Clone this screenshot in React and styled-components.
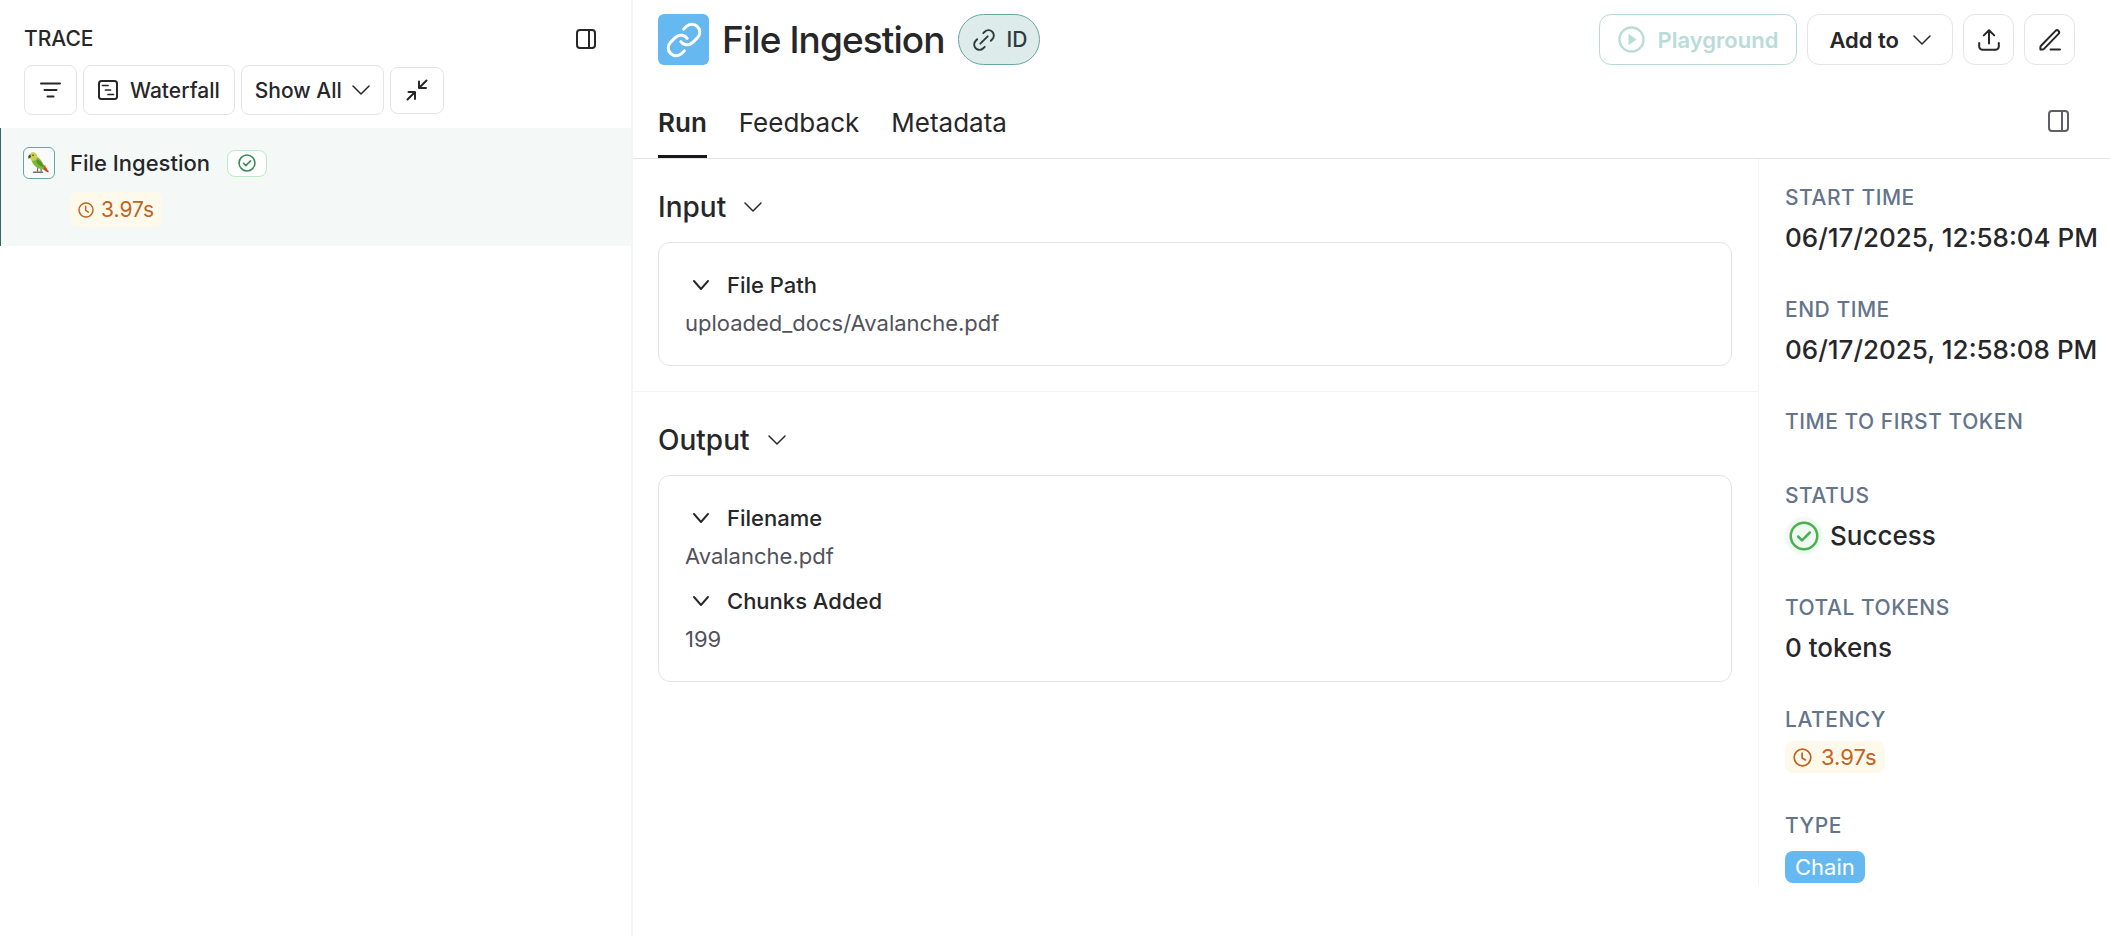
import React from 'react';
import styled, { createGlobalStyle } from 'styled-components';

const GlobalStyle = createGlobalStyle`
  *, *::before, *::after { box-sizing: border-box; }
  body {
    margin: 0;
    background: #fff;
    color: #27272a;
    font-family: Inter, "Liberation Sans", sans-serif;
    font-size: 22px;
    -webkit-font-smoothing: antialiased;
  }
  button { font: inherit; color: inherit; cursor: pointer; }
  h1, h2, h3, p, dl, dt, dd, ul { margin: 0; padding: 0; font-weight: inherit; }
`;

/* ---------- icons ---------- */

const Svg = styled.svg`
  display: block;
  flex: none;
  width: ${(p) => p.$w}px;
  height: ${(p) => p.$h || p.$w}px;
  fill: none;
  stroke: currentColor;
  stroke-width: ${(p) => p.$stroke || 2};
  stroke-linecap: round;
  stroke-linejoin: round;
`;

const PanelIcon = ({ size = 20, width = 20, divider = 13 }) => (
  <Svg $w={width} $h={size} viewBox={`0 0 ${width} ${size}`} aria-hidden="true">
    <rect x="1" y="1" width={width - 2} height={size - 2} rx="3" />
    <path d={`M${divider} 1V${size - 1}`} />
  </Svg>
);

const FilterIcon = () => (
  <Svg $w={21} $h={16} viewBox="0 0 21 16" aria-hidden="true">
    <path d="M1 1.5h19M4.5 8h12M7.5 14.5h6" />
  </Svg>
);

const WaterfallIcon = () => (
  <Svg $w={20} viewBox="0 0 20 20" aria-hidden="true">
    <rect x="1" y="1" width="18" height="18" rx="2.5" />
    <path d="M4.500 5.500h5.500M7.500 10h5M10 14.500h5.500" strokeWidth="1.7" />
  </Svg>
);

const ChevronIcon = ({ width = 18, height = 10, stroke = 1.5 }) => (
  <Svg $w={width} $h={height} $stroke={stroke} viewBox={`0 0 ${width} ${height}`} aria-hidden="true">
    <path d={`M1 1l${width / 2 - 1} ${height - 2}l${width / 2 - 1} ${2 - height}`} />
  </Svg>
);

const CollapseIcon = () => (
  <Svg $w={22} viewBox="0 0 22 22" aria-hidden="true">
    <path d="M20.5 1.5l-7 7M13 2.5V9h7M1.5 20.5l7-7M2.5 13H9v7" />
  </Svg>
);

const CheckCircleIcon = ({ size, stroke }) => (
  <Svg $w={size} $stroke={stroke} viewBox="0 0 24 24" aria-hidden="true">
    <circle cx="12" cy="12" r="10.6" />
    <path d="M7.3 12.4l3.1 3.1 6.3-6.3" />
  </Svg>
);

const ClockIcon = ({ size }) => (
  <Svg $w={size} $stroke={2.2} viewBox="0 0 24 24" aria-hidden="true">
    <circle cx="12" cy="12" r="10.5" />
    <path d="M11.5 6.5v6l4.2 2.6" />
  </Svg>
);

const ChainIcon = () => (
  <Svg $w={38} $stroke={1.9} viewBox="0 0 24 24" aria-hidden="true">
    <path d="M10 13a5 5 0 0 0 7.54.54l3-3a5 5 0 0 0-7.07-7.07l-1.72 1.71" />
    <path d="M14 11a5 5 0 0 0-7.54-.54l-3 3a5 5 0 0 0 7.07 7.07l1.71-1.71" />
  </Svg>
);

const LinkIcon = () => (
  <Svg $w={22} $stroke={1.8} viewBox="1.500 1.500 21 21" aria-hidden="true">
    <path d="M8.5 15.5l7-7" />
    <path d="M12.700 18.500l-1.400 1.400a5 5 0 0 1-7.200-7.200L5.500 11.300" />
    <path d="M18.500 12.700l1.400-1.400a5 5 0 0 0-7.200-7.200L11.300 5.500" />
  </Svg>
);

const PlayIcon = () => (
  <Svg $w={27} viewBox="0 0 27 27" $stroke={2.4} aria-hidden="true">
    <circle cx="13.5" cy="13.5" r="12" />
    <path d="M10.500 7.800l8 5.700-8 5.700z" fill="currentColor" stroke="none" />
  </Svg>
);

const UploadIcon = () => (
  <Svg $w={22} viewBox="0 0 22 22" aria-hidden="true">
    <path d="M11 14.500V1.500M5.800 6.400L11 1.200l5.200 5.200M1.200 14v3.400a3.400 3.400 0 0 0 3.400 3.400h12.800a3.400 3.400 0 0 0 3.400-3.400V14" />
  </Svg>
);

const EditIcon = () => (
  <Svg $w={22} viewBox="0 0 22 22" aria-hidden="true">
    <path d="M11.5 20.500H21" />
    <path d="M1.400 18.200a2 2 0 0 1 .6-1.400L16.500 1.900a2.100 2.100 0 0 1 3 3L5 19.900a2 2 0 0 1-1.400.6H1.400z" />
  </Svg>
);

const ParrotIcon = () => (
  <svg width="24" height="24" viewBox="0 0 24 24" aria-hidden="true">
    <path d="M11 15l-.6 5.6M14 16.5l.2 4.2" stroke="#77716c" strokeWidth="1.3" />
    <path d="M6.500 21.300h9" stroke="#77716c" strokeWidth="1.5" strokeLinecap="round" />
    <path d="M14 12l4 2.6 4 6.3-3.2-.5-4.2-4z" fill="#d9652b" />
    <path d="M17 16l4.900 5.200-1.600-.2-4.200-3.600z" fill="#b93f2c" />
    <path d="M4.500 8.500c.6 4.600 4.500 8.600 9 9.200l3.500 1.300-.5-4.400c-.6-4-4-7.200-6.400-8.600z" fill="#7cba35" />
    <path d="M9.500 8c3.600 1.500 6.600 4.500 7 8.500l-3.400-1.700C10.800 13.500 9 11 9.500 8z" fill="#55922a" />
    <path d="M2.500 6.600C1.800 3.200 3.800 1.300 6.200 1.300c2.800 0 4.300 2.700 4.100 5.500-.3 2.600-3.600 3.600-5.800 2.600z" fill="#cbd04f" />
    <path d="M3.300 3.400C1.100 3.700.7 6 1.800 8c.5-1.100 1.500-1.500 2.300-2.100z" fill="#4b3f3f" />
    <circle cx="6" cy="4.300" r=".8" fill="#3b3030" />
  </svg>
);

/* ---------- page ---------- */

const Page = styled.div`
  display: flex;
  min-height: 100vh;
`;

const Sidebar = styled.section`
  flex: 0 0 30%;
  border-right: 2px solid #f4f4f5;
`;

const SidebarHeader = styled.header`
  display: flex;
  align-items: center;
  justify-content: space-between;
  padding: 24px 35px 0 24px;
  line-height: 30px;
`;

const SidebarTitle = styled.h2`
  font-size: 21px;
  font-weight: 500;
`;

const IconButton = styled.button`
  display: flex;
  padding: 0;
  border: 0;
  background: none;
  color: ${(p) => (p.$muted ? '#5f5f66' : '#27272a')};
`;

const Toolbar = styled.div`
  display: flex;
  align-items: center;
  gap: 6px;
  padding: 11px 24px 13px;
`;

const Button = styled.button`
  display: flex;
  align-items: center;
  justify-content: center;
  gap: ${(p) => p.$gap || 12}px;
  height: ${(p) => p.$h || 50}px;
  min-width: ${(p) => p.$min || 0}px;
  padding: 0 ${(p) => p.$px || 0}px;
  border: 1px solid #e4e4e7;
  border-radius: ${(p) => p.$radius || 8}px;
  background: #fff;
  color: #27272a;
  font-size: ${(p) => p.$size || 21}px;
  font-weight: ${(p) => p.$weight || 500};
  white-space: nowrap;
`;

const PlaygroundButton = styled(Button)`
  border-color: #b5dbd7;
  color: #b9dcd8;
`;

const TraceRow = styled.article`
  display: flex;
  gap: 15px;
  padding: 19px 22px;
  border-left: 1px solid #2f6868;
  background: #f4f9f8;
`;

const ParrotBox = styled.span`
  display: flex;
  align-items: center;
  justify-content: center;
  width: 32px;
  height: 32px;
  border: 1px solid #68a5a3;
  border-radius: 6px;
  background: #f8fbfa;
`;

const TraceBody = styled.div`
  display: flex;
  flex-direction: column;
  align-items: flex-start;
  gap: 13px;
`;

const TraceName = styled.div`
  display: flex;
  align-items: center;
  gap: 17px;
  line-height: 32px;
  font-weight: 500;
`;

const StatusBadge = styled.span`
  display: flex;
  align-items: center;
  justify-content: center;
  width: 40px;
  height: 27px;
  border: 1px solid #bbebc8;
  border-radius: 8px;
  background: #fff;
  color: #3a8c56;
`;

const LatencyBadge = styled.span`
  display: inline-flex;
  align-items: center;
  gap: ${(p) => p.$gap}px;
  height: ${(p) => p.$h}px;
  padding: 0 ${(p) => p.$px}px;
  border-radius: 8px;
  background: #fefaeb;
  color: #c2621f;
  font-size: ${(p) => p.$size}px;
`;

const Main = styled.main`
  flex: 1;
  min-width: 0;
`;

const MainHeader = styled.header`
  display: flex;
  align-items: center;
  justify-content: space-between;
  padding: 14px 35px 0 25px;
`;

const Group = styled.div`
  display: flex;
  align-items: center;
  gap: ${(p) => p.$gap}px;
`;

const ChainLogo = styled.span`
  display: flex;
  align-items: center;
  justify-content: center;
  width: 51px;
  height: 51px;
  border-radius: 6px;
  background: #65b9f0;
  color: #fff;
`;

const Title = styled.h1`
  font-size: 37px;
  font-weight: 500;
  line-height: 51px;
  letter-spacing: -0.025em;
  white-space: nowrap;
`;

const IdButton = styled.button`
  display: flex;
  align-items: center;
  gap: 12px;
  height: 51px;
  padding: 0 12px 0 14px;
  border: 1px solid #68a5a3;
  border-radius: 26px;
  background: #ddeceb;
  color: #2b3c3e;
  font-size: 21px;
  font-weight: 500;
`;

const TabBar = styled.nav`
  display: flex;
  align-items: flex-start;
  justify-content: space-between;
  padding: 28px 41px 0 25px;
  border-bottom: 1px solid #e4e4e7;
`;

const Tab = styled.button`
  height: 65px;
  padding: 0 0 3px;
  border: 0;
  border-bottom: 3px solid ${(p) => (p.$active ? '#18181b' : 'transparent')};
  background: none;
  font-size: 26px;
  font-weight: ${(p) => (p.$active ? 600 : 400)};
`;

const ToggleSlot = styled.div`
  padding-top: 17px;
`;

const Columns = styled.div`
  display: flex;
`;

const Content = styled.div`
  flex: 1;
  min-width: 0;
`;

const Section = styled.section`
  padding: 24px 26px 25px 25px;
  & + & { border-top: 1px solid #f4f4f5; }
`;

const SectionTitle = styled.h2`
  display: flex;
  align-items: center;
  gap: 18px;
  margin-bottom: 11px;
  font-size: 28px;
  font-weight: 500;
  line-height: 48px;
`;

const Card = styled.div`
  display: flex;
  flex-direction: column;
  gap: 7px;
  padding: 23px 26px;
  border: 1px solid #e4e4e7;
  border-radius: 12px;
  line-height: 38px;
`;

const FieldName = styled.h3`
  display: flex;
  align-items: center;
  gap: 18px;
  padding-left: 8px;
  font-size: 22px;
  font-weight: 500;
`;

const FieldValue = styled.p`
  color: #52525b;
`;

const Details = styled.dl`
  display: flex;
  flex-direction: column;
  gap: 38px;
  flex: 0 0 352px;
  padding: 24px 0 2px 26px;
  border-left: 1px solid #f4f4f5;
`;

const Detail = styled.div`
  display: flex;
  flex-direction: column;
  align-items: flex-start;
  gap: ${(p) => p.$gap || 6}px;
`;

const DetailLabel = styled.dt`
  color: #64748b;
  font-size: 21px;
  font-weight: 500;
  line-height: 30px;
  letter-spacing: 0.025em;
`;

const DetailValue = styled.dd`
  display: flex;
  align-items: center;
  gap: 7px;
  font-size: 26px;
  font-weight: 500;
  line-height: 38px;
  white-space: nowrap;
`;

const BadgeValue = styled.dd`
  display: flex;
  font-size: 22px;
`;

const SuccessMark = styled.span`
  display: flex;
  padding: 4px;
  border-radius: 50%;
  background: #eefaf2;
  color: #4caf50;
`;

const TypeBadge = styled.span`
  padding: 0 10px;
  border-radius: 8px;
  background: #65b9f0;
  color: #fff;
  line-height: 32px;
`;

const Field = ({ name, value }) => (
  <div>
    <FieldName>
      <ChevronIcon width={16} height={10} stroke={1.9} />
      {name}
    </FieldName>
    <FieldValue>{value}</FieldValue>
  </div>
);

const FieldSection = ({ title, fields }) => (
  <Section>
    <SectionTitle>
      {title}
      <ChevronIcon />
    </SectionTitle>
    <Card>
      {fields.map(([name, value]) => (
        <Field key={name} name={name} value={value} />
      ))}
    </Card>
  </Section>
);

const TextDetail = ({ label, value }) => (
  <Detail>
    <DetailLabel>{label}</DetailLabel>
    <DetailValue>{value}</DetailValue>
  </Detail>
);

export default function App() {
  return (
    <>
      <GlobalStyle />
      <Page>
        <Sidebar>
          <SidebarHeader>
            <SidebarTitle>TRACE</SidebarTitle>
            <IconButton aria-label="Toggle trace panel">
              <PanelIcon />
            </IconButton>
          </SidebarHeader>
          <Toolbar>
            <Button $min={53} aria-label="Filter">
              <FilterIcon />
            </Button>
            <Button $px={14}>
              <WaterfallIcon />
              Waterfall
            </Button>
            <Button $px={13} $gap={10}>
              Show All
              <ChevronIcon />
            </Button>
            <Button $min={54} $h={47} aria-label="Collapse all">
              <CollapseIcon />
            </Button>
          </Toolbar>
          <TraceRow>
            <ParrotBox>
              <ParrotIcon />
            </ParrotBox>
            <TraceBody>
              <TraceName>
                File Ingestion
                <StatusBadge>
                  <CheckCircleIcon size={18} stroke={2.1} />
                </StatusBadge>
              </TraceName>
              <LatencyBadge $h={35} $px={8} $gap={7} $size={21}>
                <ClockIcon size={16} />
                3.97s
              </LatencyBadge>
            </TraceBody>
          </TraceRow>
        </Sidebar>

        <Main>
          <MainHeader>
            <Group $gap={13}>
              <ChainLogo>
                <ChainIcon />
              </ChainLogo>
              <Title>File Ingestion</Title>
              <IdButton>
                <LinkIcon />
                ID
              </IdButton>
            </Group>
            <Group $gap={10}>
              <PlaygroundButton $h={51} $px={18} $gap={13} $size={22} $weight={600} $radius={12} disabled>
                <PlayIcon />
                Playground
              </PlaygroundButton>
              <Button $h={51} $px={21} $size={22} $weight={600} $gap={14} $radius={12}>
                Add to
                <ChevronIcon />
              </Button>
              <Button $h={51} $min={51} $radius={12} aria-label="Share">
                <UploadIcon />
              </Button>
              <Button $h={51} $min={51} $radius={12} aria-label="Annotate">
                <EditIcon />
              </Button>
            </Group>
          </MainHeader>
          <TabBar>
            <Group $gap={32}>
              <Tab $active>Run</Tab>
              <Tab>Feedback</Tab>
              <Tab>Metadata</Tab>
            </Group>
            <ToggleSlot>
              <IconButton $muted aria-label="Toggle details panel">
                <PanelIcon size={22} width={21} divider={14} />
              </IconButton>
            </ToggleSlot>
          </TabBar>
          <Columns>
            <Content>
              <FieldSection title="Input" fields={[['File Path', 'uploaded_docs/Avalanche.pdf']]} />
              <FieldSection
                title="Output"
                fields={[
                  ['Filename', 'Avalanche.pdf'],
                  ['Chunks Added', '199'],
                ]}
              />
            </Content>
            <Details>
              <TextDetail label="START TIME" value="06/17/2025, 12:58:04 PM" />
              <TextDetail label="END TIME" value="06/17/2025, 12:58:08 PM" />
              <Detail>
                <DetailLabel>TIME TO FIRST TOKEN</DetailLabel>
                <dd />
              </Detail>
              <TextDetail
                label="STATUS"
                value={
                  <>
                    <SuccessMark>
                      <CheckCircleIcon size={30} stroke={2} />
                    </SuccessMark>
                    Success
                  </>
                }
              />
              <TextDetail label="TOTAL TOKENS" value="0 tokens" />
              <Detail>
                <DetailLabel>LATENCY</DetailLabel>
                <BadgeValue>
                  <LatencyBadge $h={32} $px={8} $gap={9} $size={22}>
                    <ClockIcon size={19} />
                    3.97s
                  </LatencyBadge>
                </BadgeValue>
              </Detail>
              <Detail $gap={10}>
                <DetailLabel>TYPE</DetailLabel>
                <BadgeValue>
                  <TypeBadge>Chain</TypeBadge>
                </BadgeValue>
              </Detail>
            </Details>
          </Columns>
        </Main>
      </Page>
    </>
  );
}
